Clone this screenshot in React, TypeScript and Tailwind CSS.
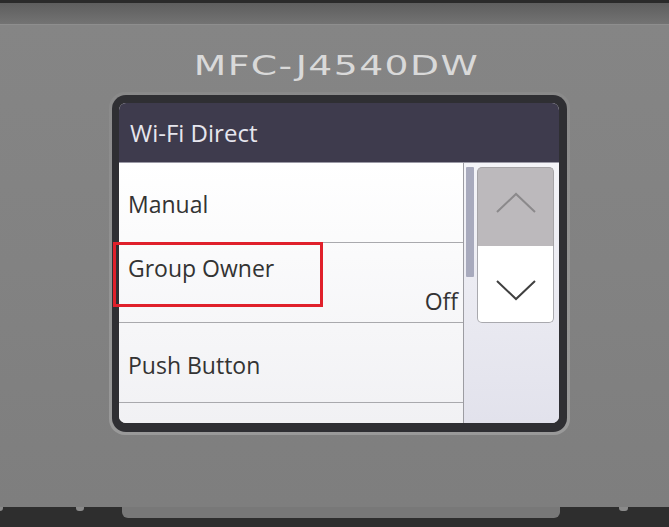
import React from 'react';

// Chevron drawn for the scroll arrows on the touch panel
function Chevron({ up, className }: { up?: boolean; className?: string }) {
  return (
    <svg width="42" height="22" viewBox="0 0 42 22" className={className}>
      <polyline
        points={up ? '2,20 21,2 40,20' : '2,2 21,20 40,2'}
        fill="none"
        stroke="currentColor"
        strokeWidth="2"
      />
    </svg>
  );
}

function Row({ children, className }: { children: React.ReactNode; className?: string }) {
  return (
    <div className={`h-[80px] border-b border-[#a9a9ad] ${className ?? ''}`}>{children}</div>
  );
}

export default function App() {
  return (
    <div className="w-[669px] h-[527px] overflow-hidden flex flex-col bg-[#2e2e2e] font-['Open_Sans',sans-serif]">
      <div className="h-[3px] bg-[#2a2a2a]" />
      <div className="h-[22px] bg-gradient-to-b from-[#5e5e5e] to-[#737373] border-b border-[#8e8e8e]" />

      {/* printer control panel body */}
      <div className="relative h-[482px] bg-gradient-to-b from-[#858585] via-[#828282] to-[#7e7e7e] flex flex-col">
        <div className="pt-[27px] h-[67px] flex justify-center pl-[4px]">
          <span className="inline-block scale-x-[1.45] font-['DejaVu_Sans',sans-serif] text-[26px] leading-[28px] tracking-[1px] text-[#d9d9d9]">
            MFC-J4540DW
          </span>
        </div>

        <div className="ml-[109px] w-[461px] h-[343px] rounded-[16px] p-[3px] bg-gradient-to-b from-[#8a8a8a] to-[#999999]">
          <div className="w-full h-full rounded-[14px] bg-[#2f2f33] pl-[7px] pr-[8px] pt-[8px] pb-[9px]">
            <div className="w-full h-full rounded-[7px] overflow-hidden flex flex-col bg-white">
              {/* title bar */}
              <div className="h-[60px] shrink-0 bg-[#3e3b4d] flex items-center pl-[11px] text-[24px] text-[#e6e6ee] border-b border-[#9b9aa6]">
                Wi-Fi Direct
              </div>

              <div className="flex flex-1 min-h-0">
                {/* menu list */}
                <div className="w-[344px] flex flex-col bg-gradient-to-b from-white to-[#f1f1f4] text-[23px] text-[#333333]">
                  <Row className="flex items-center pl-[9px] pt-[4px]">Manual</Row>
                  <Row className="flex flex-col justify-between pl-[9px] pr-[5px] pt-[9px] pb-[5px]">
                    <span className="leading-[32px]">Group Owner</span>
                    <span className="self-end leading-[32px]">Off</span>
                  </Row>
                  <Row className="flex items-center pl-[9px] pt-[6px]">Push Button</Row>
                  <div className="flex-1" />
                </div>

                {/* scroll rail and buttons */}
                <div className="flex-1 flex border-l border-[#9c9ca2] bg-gradient-to-b from-[#f4f4f8] to-[#e2e2ec]">
                  <div className="w-[13px] pt-[4px] pl-[2px]">
                    <div className="w-[8px] h-[110px] bg-[#a8aabd] rounded-[1px]" />
                  </div>
                  <div className="w-[77px] pt-[4px] flex flex-col">
                    <div className="h-[79px] rounded-t-[5px] bg-[#bcb9bc] border border-[#a5a3a6] border-b-0 flex items-center justify-center text-[#8b898b] pb-[8px]">
                      <Chevron up />
                    </div>
                    <div className="h-[77px] rounded-b-[5px] bg-white border border-[#a9a9ae] border-t-0 flex items-center justify-center text-[#404040] pt-[12px]">
                      <Chevron />
                    </div>
                  </div>
                </div>
              </div>
            </div>
          </div>
        </div>

        {/* highlight frame around the selected entry */}
        <div className="absolute left-[113px] top-[217px] w-[210px] h-[65px] border-[3px] border-[#e0202b]" />
      </div>

      {/* base below the panel */}
      <div className="relative flex-1 bg-[#2e2e2e]">
        <div className="absolute left-[122px] top-0 w-[438px] h-[11px] rounded-b-[6px] bg-[#787878]" />
        <div className="absolute left-0 top-0 w-[3px] h-[4px] rounded-br-[3px] bg-[#8a8a8a]" />
        <div className="absolute left-[76px] top-0 w-[8px] h-[4px] rounded-b-[3px] bg-[#8a8a8a]" />
        <div className="absolute left-[619px] top-0 w-[9px] h-[4px] rounded-b-[3px] bg-[#8a8a8a]" />
      </div>
    </div>
  );
}
